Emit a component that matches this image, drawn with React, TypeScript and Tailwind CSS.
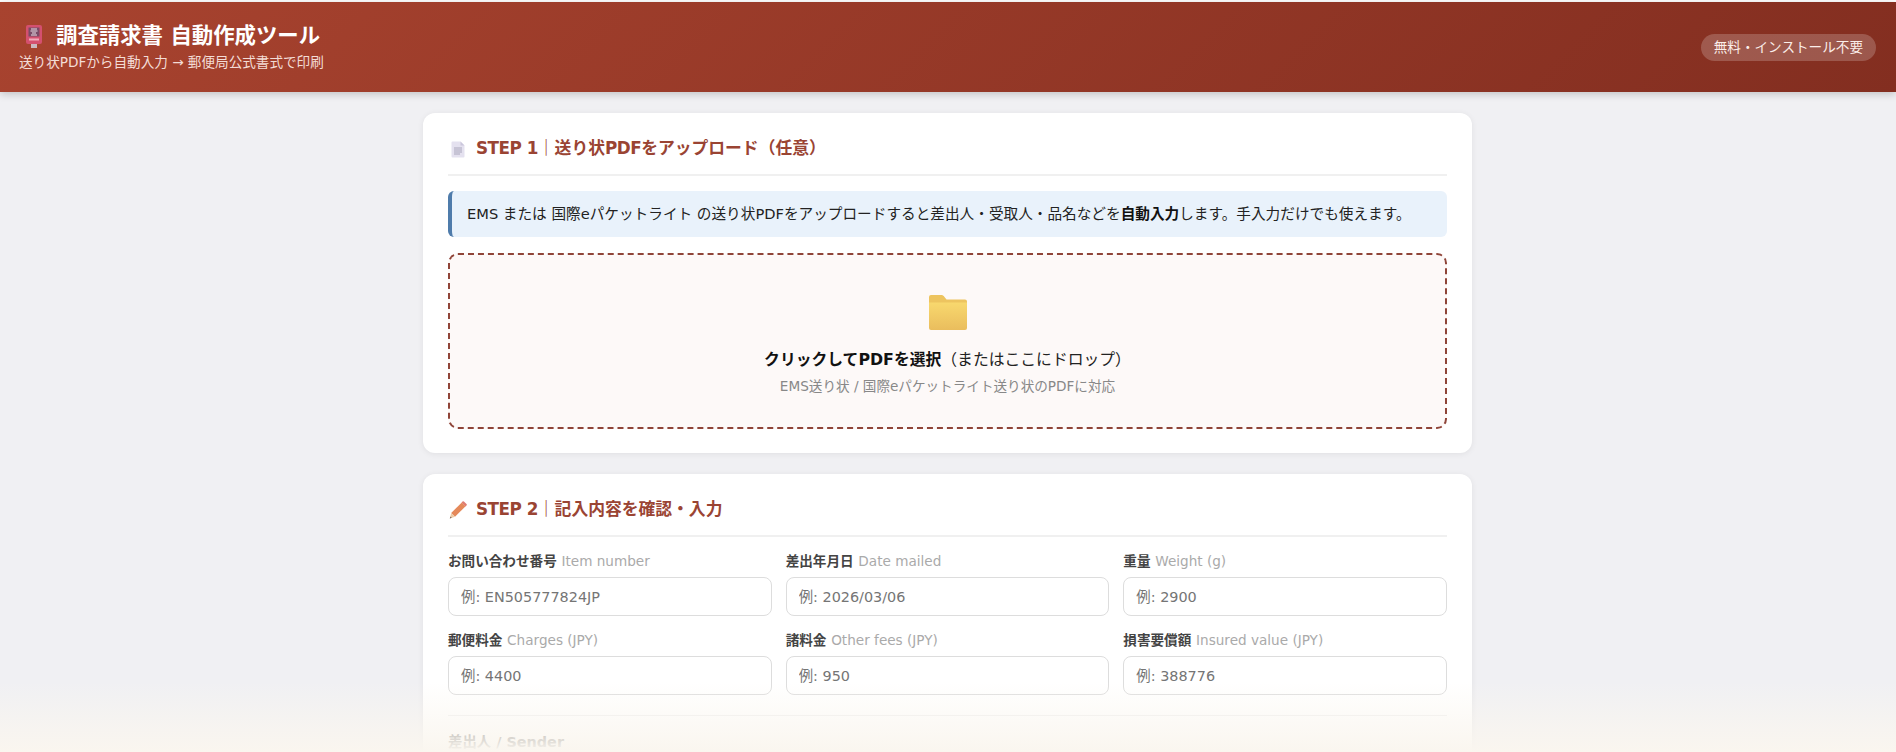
const FONT = "font-['DejaVu_Sans','Noto_Sans_CJK_JP',sans-serif]";

function Postbox() {
  return (
    <svg width="20" height="24" viewBox="0 0 20 24" className="shrink-0">
      <rect x="7" y="19" width="6" height="5" fill="#cbb8c0" />
      <rect x="2" y="1" width="16" height="19" rx="2" fill="#d4506f" />
      <rect x="4.500" y="3.500" width="11" height="9" fill="#7a4a66" />
      <path d="M7 5h6M6.500 7h7M8 9h4M7 11h6" stroke="#e8dfe6" strokeWidth="1" />
      <rect x="5" y="14.500" width="10" height="2" fill="#f1a9ba" />
    </svg>
  );
}

function PageIcon() {
  return (
    <svg width="14" height="17" viewBox="0 0 14 17" className="shrink-0">
      <path d="M0.500 1.500a1 1 0 0 1 1-1H9.500L13.500 4.500V15.500a1 1 0 0 1-1 1H1.500a1 1 0 0 1-1-1Z" fill="#e4e1ef" />
      <path d="M9.500 .5V4.500H13.500Z" fill="#cbc7dc" />
      <path d="M3 7h8M3 9h8M3 11h8M3 13h6" stroke="#a9a6bb" strokeWidth="1" />
    </svg>
  );
}

function PencilIcon() {
  return (
    <svg width="18" height="18" viewBox="0 0 18 18" className="shrink-0">
      <path d="M12.800 1.400 16.600 5.200 6 15.800 2.200 12Z" fill="#e5895a" />
      <path d="M14.900 0.500 17.500 3.100a1 1 0 0 1 0 1.400L16.600 5.400 12.600 1.400l.9-.9a1 1 0 0 1 1.400 0Z" fill="#df7d72" />
      <path d="M2.200 12 6 15.800 0.800 17.400Z" fill="#eccaa6" />
      <path d="M1.400 15.400 2.800 16.800 0.800 17.400Z" fill="#7d6a5f" />
    </svg>
  );
}

function FolderIcon() {
  return (
    <svg width="38" height="36" viewBox="0 0 38 36" className="shrink-0">
      <defs>
        <linearGradient id="folderFront" x1="0" y1="0" x2="0" y2="1">
          <stop offset="0" stopColor="#f8d86e" />
          <stop offset="1" stopColor="#eabd5d" />
        </linearGradient>
      </defs>
      <path d="M0 3a2 2 0 0 1 2-2h10c1.500 0 2.500.6 3.500 2l2 2.500H36a2 2 0 0 1 2 2V12H0Z" fill="#edc45f" />
      <path d="M0 8.500h38V34a2 2 0 0 1-2 2H2a2 2 0 0 1-2-2Z" fill="url(#folderFront)" />
    </svg>
  );
}

function Field({ jp, en, ph }: { jp: string; en: string; ph: string }) {
  return (
    <div className="flex flex-col">
      <label className="mb-[7px] h-[18px] text-[13.600px] leading-[18px] font-bold text-[#444]">
        {jp} <span className="font-normal text-[#aaa]">{en}</span>
      </label>
      <input
        readOnly
        placeholder={ph}
        className={`h-[39px] w-full rounded-lg border-[1.5px] border-[#ddd] bg-white px-3 text-[14.400px] outline-none placeholder:text-[#757575] ${FONT}`}
      />
    </div>
  );
}

const FIELDS = [
  ["お問い合わせ番号", "Item number", "例: EN505777824JP"],
  ["差出年月日", "Date mailed", "例: 2026/03/06"],
  ["重量", "Weight (g)", "例: 2900"],
  ["郵便料金", "Charges (JPY)", "例: 4400"],
  ["諸料金", "Other fees (JPY)", "例: 950"],
  ["損害要償額", "Insured value (JPY)", "例: 388776"],
];

function Tight({ children }: { children: string }) {
  return <span className="tracking-[-0.5px]">{children}</span>;
}

export default function App() {
  return (
    <div className={`relative h-[752px] overflow-hidden bg-[#f0f0f3] pt-[2px] ${FONT}`}>
      <div className="absolute inset-x-0 top-0 h-[2px] bg-white" />
      <header className="relative z-10 flex h-[90px] items-center justify-between bg-[linear-gradient(135deg,#a8432f,#832e20)] pr-[20px] pl-[19px] text-white shadow-[0_2px_8px_rgba(0,0,0,0.2)]">
        <div>
          <h1 className="-mt-[1px] flex items-center text-[21.400px] leading-[30px] font-bold">
            <span className="mr-[12px] ml-[5px] flex h-[24px] w-[20px]"><Postbox /></span>
            調査請求書 自動作成ツール
          </h1>
          <p className="mt-[1px] text-[13.600px] leading-[21px] text-[#f3dcd6]">送り状PDFから自動入力 → 郵便局公式書式で印刷</p>
        </div>
        <div className="flex h-[27px] items-center rounded-full bg-white/20 px-[13px] text-[13.600px] text-[#fbeeea]">
          無料・インストール不要
        </div>
      </header>

      <main className="mt-[21px] ml-[423px] flex w-[1049px] flex-col gap-[21px]">
        <section className="rounded-xl bg-white px-[25px] pt-[17px] pb-[24px] shadow-[0_1px_6px_rgba(0,0,0,0.07)]">
          <h2 className="flex h-[46px] items-center gap-[11px] border-b-2 border-[#f0f0f0] pb-[6px] text-[16.800px] font-bold text-[#9a4433]">
            <span className="ml-[3px] flex"><PageIcon /></span>
            <span><Tight>STEP 1</Tight>｜送り状<Tight>PDF</Tight>をアップロード（任意）</span>
          </h2>
          <div className="mt-[15px] flex h-[46px] items-center rounded-md border-l-4 border-[#4f7cab] bg-[#e9f2fb] pl-[15px] text-[14.650px] text-[#222]">
            <span>EMS または 国際eパケットライト の送り状PDFをアップロードすると差出人・受取人・品名などを<b className="font-bold text-[#111]">自動入力</b>します。手入力だけでも使えます。</span>
          </div>
          <div className="mt-[16px] flex h-[176px] flex-col items-center rounded-[10px] border-2 border-dashed border-[#8f4438] bg-[#fdf9f8] pt-[39px]">
            <FolderIcon />
            <p className="mt-[18px] text-[15.800px] leading-[24px] text-[#222]"><b className="font-bold text-[#111]">クリックしてPDFを選択</b>（またはここにドロップ）</p>
            <p className="mt-[4px] text-[13.600px] leading-[20px] text-[#888]">EMS送り状 / 国際eパケットライト送り状のPDFに対応</p>
          </div>
        </section>

        <section className="rounded-xl bg-white px-[25px] pt-[17px] pb-[24px] shadow-[0_1px_6px_rgba(0,0,0,0.07)]">
          <h2 className="flex h-[46px] items-center gap-[9px] border-b-2 border-[#f0f0f0] pb-[6px] text-[16.800px] font-bold text-[#9a4433]">
            <span className="ml-[1px] flex"><PencilIcon /></span>
            <span><Tight>STEP 2</Tight>｜記入内容を確認・入力</span>
          </h2>
          <div className="mt-[15px] grid grid-cols-3 gap-x-[14px] gap-y-[15px]">
            {FIELDS.map(([jp, en, ph]) => (
              <Field key={jp} jp={jp} en={en} ph={ph} />
            ))}
          </div>
          <div className="mt-[20px] border-t border-[#eee] pt-[16px] text-[14.400px] font-bold text-[#555]">差出人 / Sender</div>
        </section>
      </main>

      <div className="absolute inset-x-0 bottom-0 z-20 h-[70px] bg-gradient-to-b from-transparent to-[#faf6ef]" />
    </div>
  );
}
